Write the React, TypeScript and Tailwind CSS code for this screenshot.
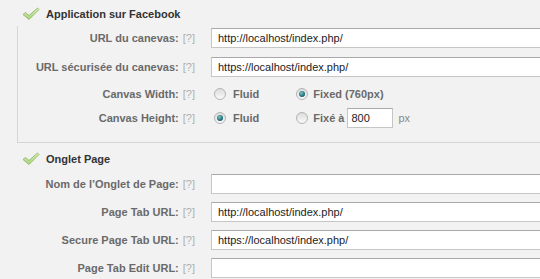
import React from "react";

function Check() {
  return (
    <svg width="18" height="14" viewBox="0 0 18 14" className="shrink-0">
      <defs>
        <linearGradient id="cg" x1="0" y1="0" x2="0" y2="1">
          <stop offset="0" stopColor="#d9efb8" />
          <stop offset="1" stopColor="#a9d27a" />
        </linearGradient>
      </defs>
      <path
        d="M1 7.5 L3.5 5.5 L7 8.5 L15.5 1 L17 2.5 L7 12.5 Z"
        fill="url(#cg)"
        stroke="#8fb868"
        strokeWidth="0.9"
        strokeLinejoin="round"
      />
    </svg>
  );
}

function Radio({ checked }: { checked?: boolean }) {
  return (
    <span className="relative inline-flex h-[12px] w-[12px] shrink-0 items-center justify-center rounded-full border border-[#b4b4b4] bg-gradient-to-b from-[#dcdcdc] to-[#fafafa]">
      {checked && (
        <span className="h-[6px] w-[6px] rounded-full bg-[radial-gradient(circle_at_40%_35%,#7fc3c9,#1f6f78_60%,#0d3f47)]" />
      )}
    </span>
  );
}

function Label({ text }: { text: string }) {
  return (
    <div className="w-[196px] shrink-0 pr-[1px] text-right text-[11px] leading-none whitespace-nowrap">
      <span className="font-bold text-[#6a6a6a]">{text}</span>
      <span className="ml-[4px] text-[#b0b0b0]">[?]</span>
    </div>
  );
}

function TextRow({ label, value, className }: { label: string; value: string; className?: string }) {
  return (
    <div className={"flex h-[20px] items-center " + (className ?? "")}>
      <Label text={label} />
      <div className="ml-[15px] flex h-[20px] w-[340px] shrink-0 items-center border border-[#c6c6c6] border-t-[#a9a9a9] bg-white pl-[6px] text-[11px] text-[#222]">
        {value}
      </div>
    </div>
  );
}

export default function App() {
  return (
    <div
      className="h-[279px] w-[540px] overflow-hidden bg-[#f2f2f2]"
      style={{ fontFamily: '"Liberation Sans", Arial, sans-serif' }}
    >
      {/* Section 1 header */}
      <div className="mt-[4px] flex h-[20px] items-center pl-[22px]">
        <Check />
        <span className="ml-[6px] text-[11px] font-bold text-[#333]">Application sur Facebook</span>
      </div>
      {/* Section 1 panel */}
      <div className="ml-[17px] mt-[2px] flex h-[117px] flex-col border-b border-l border-[#d6d6d6] pt-[2px]">
        <div className="-ml-[18px] flex flex-col">
          <TextRow label="URL du canevas:" value="http://localhost/index.php/" />
          <TextRow label="URL sécurisée du canevas:" value="https://localhost/index.php/" className="mt-[9px]" />
          <div className="mt-[7px] flex h-[20px] items-center">
            <Label text="Canvas Width:" />
            <div className="ml-[18px] flex items-center">
              <Radio />
              <span className="ml-[7px] text-[11px] font-bold text-[#6a6a6a]">Fluid</span>
            </div>
            <div className="ml-[37px] flex items-center">
              <Radio checked />
              <span className="ml-[5px] text-[11px] font-bold text-[#6a6a6a]">Fixed (760px)</span>
            </div>
          </div>
          <div className="mt-[4px] flex h-[20px] items-center">
            <Label text="Canvas Height:" />
            <div className="ml-[18px] flex items-center">
              <Radio checked />
              <span className="ml-[7px] text-[11px] font-bold text-[#6a6a6a]">Fluid</span>
            </div>
            <div className="ml-[37px] flex items-center">
              <Radio />
              <span className="ml-[5px] text-[11px] font-bold text-[#6a6a6a]">Fixé à</span>
              <div className="ml-[3px] flex h-[20px] w-[46px] items-center border border-[#c6c6c6] border-t-[#a9a9a9] bg-white pl-[3px] text-[11px] text-[#222]">
                800
              </div>
              <span className="ml-[5px] text-[11px] text-[#8a8a8a]">px</span>
            </div>
          </div>
        </div>
      </div>
      {/* Section 2 header */}
      <div className="mt-[6px] flex h-[20px] items-center pl-[22px]">
        <Check />
        <span className="ml-[6px] text-[11px] font-bold text-[#333]">Onglet Page</span>
      </div>
      <div className="mt-[5px] flex flex-col">
        <TextRow label="Nom de l’Onglet de Page:" value="" />
        <TextRow label="Page Tab URL:" value="http://localhost/index.php/" className="mt-[8px]" />
        <TextRow label="Secure Page Tab URL:" value="https://localhost/index.php/" className="mt-[8px]" />
        <TextRow label="Page Tab Edit URL:" value="" className="mt-[8px]" />
      </div>
    </div>
  );
}
